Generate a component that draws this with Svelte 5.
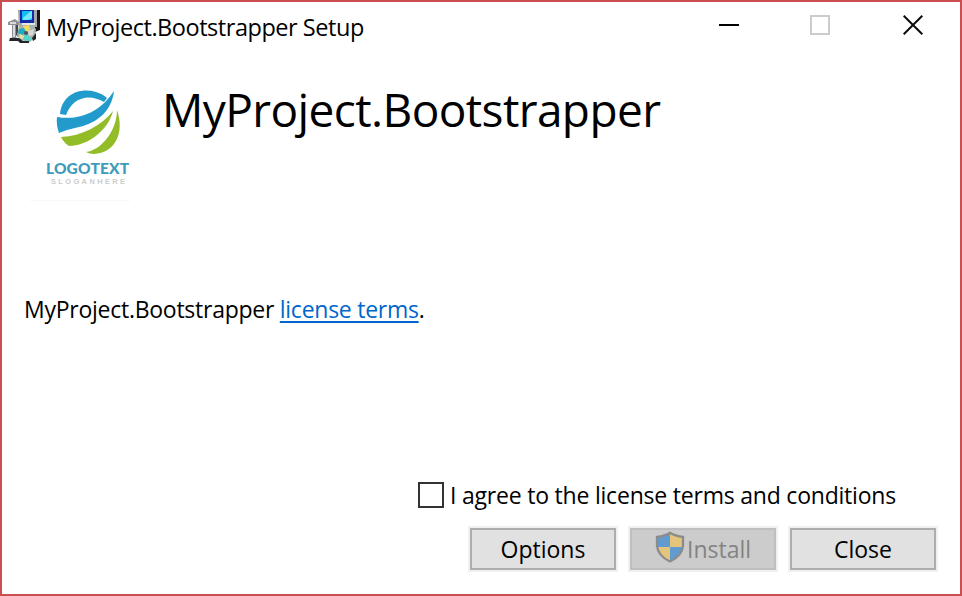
<script>
  let agreed = $state(false);
</script>

<div class="window">
  <header>
    <svg class="app-icon" width="32" height="34" viewBox="0 0 32 34">
      <path d="M10 1h22v19l-7 3H11z" fill="#a7a8ac" />
      <path d="M29 1h3v20l-5 2V18h2z" fill="#17171b" />
      <path d="M12 1h14v13H12z" fill="#1429a8" />
      <path d="M14 2h10v9H14z" fill="#16bdf2" />
      <path d="M15 9l8-7h1v7l-4 2h-5z" fill="#72e8fa" />
      <path d="M14 14h13v2H14z" fill="#e6e6e8" />
      <path d="M0 13l7-3 4 3v3l-3 1v11l3 3H2l2-3V16H0z" fill="#909195" />
      <path d="M2 13h6v2H2zM5 16h2v12H5z" fill="#d9dadc" />
      <path d="M8 16h2v12l-2-2z" fill="#45464a" />
      <path d="M11 17l13-1 4 4-1 8-5 5-10-2-3-5z" fill="#a5b5ad" />
      <path d="M15 17l6-1 1 5-4 2z" fill="#f2dc60" />
      <path d="M11 20l5-1 2 4-4 3-4-2z" fill="#1eabc0" />
      <path d="M20 22l6-2-1 6-4 1z" fill="#d8d9d4" />
      <path d="M17 25l4 2 3 4-6 1-3-3z" fill="#54d4cf" />
      <path d="M12 25l4 2-1 3-4-1z" fill="#e8e2a0" />
      <circle cx="18" cy="24" r="2" fill="#49525c" />
      <path d="M2 29h9l4 3h6v2h-9l-2-2H1zM24 29l4-5v6l-3 2z" fill="#242529" />
    </svg>
    <span class="caption">MyProject.Bootstrapper Setup</span>
    <div class="controls">
      <svg width="20" height="20" viewBox="0 0 20 20"><path d="M0 10h20" stroke="#000" stroke-width="2" /></svg>
      <svg width="20" height="20" viewBox="0 0 20 20"><path d="M1 1h18v18H1z" fill="none" stroke="#ccc" stroke-width="2" /></svg>
      <svg width="20" height="20" viewBox="0 0 20 20"><path d="M.7.7l18.6 18.6M19.3.7L.7 19.3" stroke="#0c0c10" stroke-width="2" /></svg>
    </div>
  </header>

  <section class="brand">
    <svg class="logo" width="128" height="128" viewBox="0 0 128 128">
      <path d="M4 125.500h100" stroke="#f8f8f8" />
      <path d="M34 39C36 20 53 12 70 17Q77 19 81 23L78 27Q62 18 49 27Q43 32 40 40z" fill="#229bcc" />
      <path d="M31 42C55 46 75 36 88 16C86 35 72 48 53 52Q43 54 33 58Q30 50 31 42z" fill="#229bcc" />
      <path d="M35 62C56 61 75 51 87 36C82 56 61 71 43 71Q38 68 35 62z" fill="#93bc29" />
      <path d="M91 35C99 58 89 78 68 79Q63 79 60 77C76 75 91 55 91 35z" fill="#93bc29" />
      <text x="20" y="99" textLength="83" class="logo-name">LOGOTEXT</text>
      <text x="25" y="109" textLength="74" class="logo-slogan">SLOGANHERE</text>
    </svg>
    <h1>MyProject.Bootstrapper</h1>
  </section>

  <p class="license">MyProject.Bootstrapper <a href="#license">license terms</a>.</p>

  <label class="agree">
    <input type="checkbox" bind:checked={agreed} />
    <span>I agree to the license terms and conditions</span>
  </label>

  <footer>
    <button>Options</button>
    <button class="install" disabled={!agreed}>
      <svg width="30" height="32" viewBox="0 0 30 32">
        <path d="M15 1.500Q20 5 28 6V15Q27 25 15 30.500Q3 25 2 15V6Q10 5 15 1.500z" fill="#e5c47c" />
        <path d="M15 2v14H2V6Q10 5 15 2zM15 16h13Q27 25 15 30z" fill="#629bd0" />
        <path d="M15 1.800Q20 5 28 6V15Q27 25 15 30.500Q3 25 2 15V6Q10 5 15 1.800z" fill="none" stroke="#8b8b8b" stroke-width="2.300" />
      </svg>
      <span>Install</span>
    </button>
    <button>Close</button>
  </footer>
</div>

<style>
  :global(body) { margin: 0; background: #fff; }
  .window {
    box-sizing: border-box;
    width: 962px;
    height: 596px;
    border: 2px solid #cb4e50;
    background: #fff;
    color: #000;
    font-family: "Open Sans", "Noto Sans", sans-serif;
    display: flex;
    flex-direction: column;
    overflow: hidden;
  }
  svg { display: block; flex: none; }
  header { height: 68px; display: flex; align-items: flex-start; }
  .app-icon { margin: 7px 0 0 6px; }
  .caption { margin: 9px 0 0 6px; font-size: 23.500px; line-height: 32px; letter-spacing: -0.46px; white-space: nowrap; }
  .controls { display: flex; margin: 13px 37px 0 auto; }
  .controls svg:nth-child(2) { margin: 0 73px 0 71px; }
  .brand { display: flex; height: 222px; }
  .logo { margin: 5px 0 0 24px; }
  .logo-name { font: 900 15.500px Lato, sans-serif; fill: #3f9bbb; }
  .logo-slogan { font: 700 7.500px "Liberation Sans", sans-serif; fill: #ccc; }
  h1 { margin: 7px 0 0 8px; font-size: 46px; line-height: 64px; font-weight: 400; letter-spacing: -0.6px; white-space: nowrap; }
  .license { margin: 0 0 0 22px; height: 188px; font-size: 23px; line-height: 34px; letter-spacing: -0.26px; }
  a { color: #0066cc; text-decoration-thickness: 2px; text-underline-offset: 3px; text-decoration-skip-ink: none; }
  .agree { display: flex; align-items: center; margin-left: 416px; height: 30px; font-size: 23px; letter-spacing: -0.21px; white-space: nowrap; }
  input {
    appearance: none;
    box-sizing: border-box;
    width: 26px;
    height: 26px;
    margin: 0 6px 0 0;
    border: 2px solid #333;
    background: #fff;
  }
  input:checked { background: #333; box-shadow: inset 0 0 0 4px #fff; }
  footer { display: flex; justify-content: flex-end; gap: 10px; margin: 16px 22px 0 0; }
  button {
    box-sizing: border-box;
    width: 150px;
    height: 46px;
    padding: 0;
    border: 2px solid #f0f0f0;
    background: #e1e1e1;
    box-shadow: inset 0 0 0 2px #adadad;
    color: #000;
    font: 23px/42px "Open Sans", "Noto Sans", sans-serif;
    display: flex;
    align-items: center;
    justify-content: center;
  }
  .install:disabled { background: #ccc; color: #838383; box-shadow: inset 0 0 0 2px #bfbfbf; }
  .install svg { margin: -5px 2px 0 0; }
</style>
